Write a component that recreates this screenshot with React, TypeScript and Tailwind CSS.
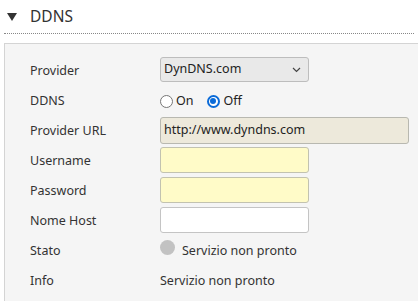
import React from "react";

const font = { fontFamily: '"Noto Sans", "Open Sans", sans-serif' };

function Row({ label, children }: { label: string; children?: React.ReactNode }) {
  return (
    <div className="flex h-[30px]">
      <div className="w-[130px] shrink-0 leading-[30px] text-[12.5px] text-[#333]">{label}</div>
      <div className="flex-1 pt-[1px] flex items-start">{children}</div>
    </div>
  );
}

export default function App() {
  return (
    <div className="w-[418px] h-[301px] bg-white overflow-hidden" style={font}>
      <div className="h-[34px] mx-[4px] flex items-center border-b border-dotted border-[#888]">
        <svg width="10" height="8" viewBox="0 0 10 8" className="ml-[3px] mt-[1px]">
          <path d="M0 0 L10 0 L5 8 Z" fill="#333" />
        </svg>
        <span className="ml-[13px] text-[15.5px] text-[#333] leading-none">DDNS</span>
      </div>
      <div className="mt-[9px] ml-[4px] h-[300px] bg-[#f5f5f5] border-t border-l border-[#d4d4d4] pt-[12px] pl-[25px]">
        <Row label="Provider">
          <div className="w-[149px] h-[25px] rounded-[3px] border border-[#bdbdbd] bg-[#e9e9e9] flex items-center justify-between pl-[3px] pr-[7px] text-[12.5px] text-[#222]">
            <span>DynDNS.com</span>
            <svg width="9" height="6" viewBox="0 0 9 6">
              <path d="M1 1 L4.5 4.5 L8 1" stroke="#444" strokeWidth="1.2" fill="none" />
            </svg>
          </div>
        </Row>
        <Row label="DDNS">
          <div className="flex items-center h-[28px] text-[12.5px] text-[#222]">
            <span className="w-[13px] h-[13px] rounded-full border border-[#767676] bg-white" />
            <span className="ml-[3px]">On</span>
            <span className="ml-[13px] w-[13px] h-[13px] rounded-full border-2 border-[#0b6bd8] bg-white flex items-center justify-center">
              <span className="w-[6px] h-[6px] rounded-full bg-[#0b6bd8]" />
            </span>
            <span className="ml-[4px]">Off</span>
          </div>
        </Row>
        <Row label="Provider URL">
          <div className="w-[249px] h-[27px] rounded-[3px] border border-[#b8b8b0] bg-[#ede9db] flex items-center pl-[3px] text-[12.5px] text-[#222]">
            http://www.dyndns.com
          </div>
        </Row>
        <Row label="Username">
          <div className="w-[149px] h-[26px] rounded-[3px] border border-[#c2c2b0] bg-[#fffbc8]" />
        </Row>
        <Row label="Password">
          <div className="w-[149px] h-[26px] rounded-[3px] border border-[#c2c2b0] bg-[#fffbc8]" />
        </Row>
        <Row label="Nome Host">
          <div className="w-[149px] h-[26px] rounded-[3px] border border-[#c4c4c4] bg-white" />
        </Row>
        <Row label="Stato">
          <div className="flex items-start pt-[3px] text-[12.5px] text-[#333]">
            <span className="w-[15px] h-[15px] rounded-full bg-[#c2c2c2]" />
            <span className="ml-[7px] mt-[3px] leading-[15px]">Servizio non pronto</span>
          </div>
        </Row>
        <Row label="Info">
          <div className="leading-[28px] text-[12.5px] text-[#333]">Servizio non pronto</div>
        </Row>
      </div>
    </div>
  );
}
